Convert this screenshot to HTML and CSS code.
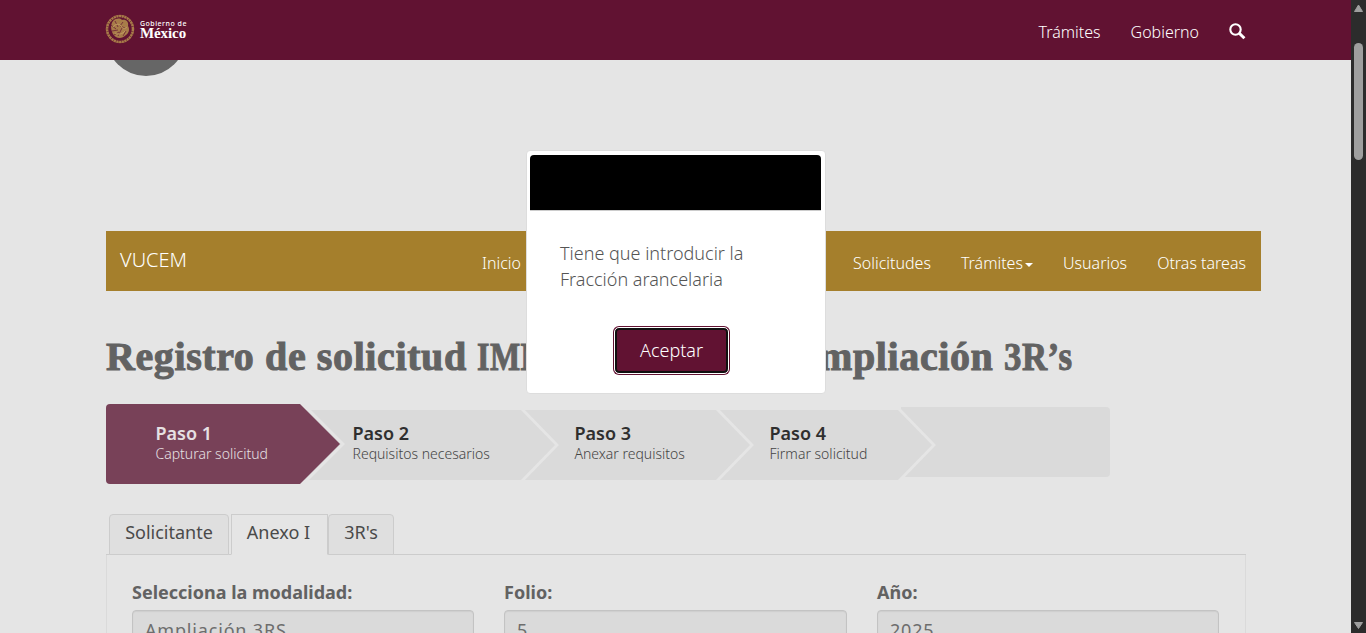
FILE: index.html
```html
<!DOCTYPE html>
<html lang="es">
<head>
<meta charset="utf-8">
<title>VUCEM</title>
<link rel="stylesheet" href="styles.css">
</head>
<body>
<div class="viewport">
  <div class="page">
    <header class="gob-bar">
      <div class="brand">
        <svg class="seal" viewBox="0 0 30 30" width="30" height="30" fill="none" stroke="#a87c49">
          <circle cx="15" cy="15" r="12.9" stroke-width="2.4" stroke-dasharray="2.2 .5"/>
          <circle cx="15" cy="15" r="13.9" stroke-width=".5"/>
          <path d="M8 7c3-3 7-3 9-1 4-1 7 2 6 6 2 3 1 7-2 9-4 4-10 4-13-1-2-4-3-9 0-13z" fill="#a87c49" stroke="none"/>
          <path d="M6 11l5 4M7 17l6-1M10 7l3 6M13 22l4-8M18 8l-3 4 5 2M9 21l5-3M18 22l3-5" stroke="#611232" stroke-width=".7"/>
          <path d="M8 13c2-3 6-4 8-1s4 3 6 1M10 19c3 2 8 1 10-2" stroke="#c09a60" stroke-width="1"/>
        </svg>
        <div class="wordmark"><span class="wm-top">Gobierno de</span><span class="wm-main">México</span></div>
      </div>
      <nav class="gob-nav">
        <a>Trámites</a><a>Gobierno</a>
        <svg class="search" viewBox="0 0 17 17" width="17" height="17" fill="none" stroke="#fff"><circle cx="6.5" cy="6.5" r="5.2" stroke-width="2.1"/><path d="M10.3 10.3L15.4 15.3" stroke-width="3"/></svg>
      </nav>
    </header>
    <div class="avatar-strip"><svg width="80" height="16" viewBox="0 0 80 16"><circle cx="40" cy="-24" r="40" fill="#666"/></svg></div>
    <nav class="vucem-bar">
      <span class="vucem-name">VUCEM</span>
      <a class="home">Inicio</a>
      <div class="vucem-links"><a>Solicitudes</a><a>Trámites<i class="caret"></i></a><a>Usuarios</a><a>Otras tareas</a></div>
    </nav>
    <h1 class="title"><span class="title-start">Registro de solicitud <span class="acronym">IMM</span></span><span class="title-end">mpliación <span class="suffix">3R’s</span></span></h1>
    <div class="steps">
      <svg class="steps-shape" width="1004" height="80" viewBox="0 0 1004 80">
        <path d="M196 6H795L830 41L795 76H196z" fill="#dadada"/>
        <path d="M795 3H1000a4 4 0 0 1 4 4V69a4 4 0 0 1-4 4H795z" fill="#dadada"/>
        <path d="M416 5L451 41L416 77M611 5L646 41L611 77M793 5L828 41L793 77M195 -2L237 40L195 82" fill="none" stroke="#e5e5e5" stroke-width="2.8"/>
        <path d="M4 0H194L234 40L194 80H4a4 4 0 0 1-4-4V4a4 4 0 0 1 4-4z" fill="#784158"/>
      </svg>
      <div class="step current"><b>Paso 1</b><span>Capturar solicitud</span></div>
      <div class="step"><b>Paso 2</b><span>Requisitos necesarios</span></div>
      <div class="step"><b>Paso 3</b><span>Anexar requisitos</span></div>
      <div class="step"><b>Paso 4</b><span>Firmar solicitud</span></div>
    </div>
    <div class="tabs"><a class="tab first">Solicitante</a><a class="tab active">Anexo I</a><a class="tab last">3R's</a></div>
    <section class="panel">
      <div class="field"><label>Selecciona la modalidad:</label><div class="input">Ampliación 3RS</div></div>
      <div class="field"><label>Folio:</label><div class="input">5</div></div>
      <div class="field"><label>Año:</label><div class="input">2025</div></div>
    </section>
  </div>
  <aside class="scrollbar">
    <svg width="15" height="633" viewBox="0 0 15 633" fill="#9f9f9f"><path d="M7.5 5L11.5 11.5H3.5z" stroke="#9f9f9f" stroke-linejoin="round"/><rect x="3" y="43" width="9" height="117" rx="4.5"/><path d="M3.5 622.5H11.5L7.5 628.5z" stroke="#9f9f9f" stroke-linejoin="round"/></svg>
  </aside>
  <div class="modal">
    <div class="modal-head"></div>
    <p class="modal-text">Tiene que introducir la<br>Fracción arancelaria</p>
    <button class="accept">Aceptar</button>
  </div>
</div>
</body>
</html>
```

FILE: styles.css
```css
* { box-sizing: border-box; }
body { margin: 0; overflow: hidden; font-family: "Noto Sans", "Open Sans", sans-serif; font-size: 16px; }
.viewport { position: relative; display: flex; width: 1366px; height: 633px; overflow: hidden; background: #e5e5e5; }
.page { width: 1351px; height: 633px; overflow: hidden; }
.scrollbar { width: 15px; background: #2c2c2c; }
.scrollbar svg { display: block; }

.gob-bar { display: flex; justify-content: space-between; height: 60px; padding: 0 105px 0 105px; background: #611232; color: #fff; }
.brand { display: flex; gap: 5px; padding-top: 14px; }
.wordmark { display: flex; flex-direction: column; padding-top: 5px; font-family: "Liberation Serif", serif; font-weight: 700; }
.wm-top { font: 500 7px/9px "Noto Sans", sans-serif; letter-spacing: .5px; white-space: nowrap; }
.wm-main { font-size: 15px; line-height: 10px; letter-spacing: -.1px; }
.gob-nav { display: flex; gap: 30px; padding-top: 21px; font-weight: 300; line-height: 22px; }
.search { margin-top: 2px; }

.avatar-strip { height: 171px; padding-left: 106px; }
.avatar-strip svg { display: block; }

.vucem-bar { display: flex; width: 1155px; height: 60px; margin-left: 106px; padding: 0 15px 0 14px; background: #a57f2c; color: #fff; font-weight: 300; line-height: 22px; }
.vucem-name { width: 362px; padding-top: 18px; font-size: 20px; }
.home { padding-top: 21px; }
.vucem-links { display: flex; gap: 30px; margin-left: auto; padding-top: 21px; }
.caret { display: inline-block; margin-left: 2px; vertical-align: middle; border: 4px solid transparent; border-top-color: #fff; border-bottom: 0; }

.title { display: flex; justify-content: space-between; width: 966px; height: 48px; margin: 42px 0 0 106px; color: #626262; font: 700 40px/48px "Liberation Serif", serif; white-space: nowrap; letter-spacing: .6px; -webkit-text-stroke: 1px #626262; }
.acronym { display: inline-block; transform: scaleX(.8); transform-origin: left; }
.suffix { display: inline-block; width: 68px; transform: scaleX(.87); transform-origin: left; }

.steps { position: relative; display: grid; grid-template-columns: 197px 222px 195px auto; width: 1004px; height: 80px; margin: 23px 0 0 106px; padding: 18px 0 0 49.5px; }
.steps-shape { position: absolute; left: 0; top: 0; }
.step { position: relative; color: #444; font-size: 14px; font-weight: 300; line-height: 17px; white-space: nowrap; }
.step b { display: block; color: #2f2f2f; font-size: 18px; font-weight: 600; line-height: 23px; }
.step.current, .step.current b { color: #e6e0e3; }

.tabs { display: flex; width: 1140px; height: 41px; margin: 30px 0 0 106px; padding-left: 3px; border-bottom: 1px solid #ccc; font-size: 18px; line-height: 35px; color: #4a4a4a; }
.tab { height: 41px; border: 1px solid #ccc; border-radius: 4px 4px 0 0; background: #dfdfdf; text-align: center; }
.first { width: 120px; margin-right: 2px; }
.active { width: 97px; padding-right: 2px; border-bottom-color: #e5e5e5; background: #e5e5e5; border-radius: 0; }
.last { width: 66px; }

.panel { display: grid; grid-template-columns: 342px 343px 342px; column-gap: 30px; width: 1140px; height: 100px; margin-left: 106px; padding: 25px 0 0 25px; border: solid #dadada; border-width: 0 1px; color: #626262; }
.field label { display: block; font-size: 18px; font-weight: 700; line-height: 25px; height: 30px; }
.input { height: 48px; padding: 6px 12px; border: 1px solid #c3c3c3; border-radius: 4px; background: #dadada; box-shadow: inset 0 1px 1px #cecece; color: #6d6d6d; font-size: 18px; line-height: 26px; letter-spacing: .82px; }

.modal { position: absolute; left: 526px; top: 150px; width: 300px; height: 244px; padding: 4px 4px 0 3px; border: 1px solid #ddd; border-radius: 4px; background: #fff; }
.modal-head { height: 56px; border-radius: 4px 4px 0 0; border-bottom: 1px solid #ccc; background: #000; }
.modal-text { margin: 29px 0 0 30px; color: #555; font-size: 18px; font-weight: 300; line-height: 26px; }
.accept { display: block; width: 113px; height: 45px; margin: 36px 0 0 85px; padding: 0 0 2px; border: 2px solid #101010; border-radius: 4px; outline: 1px solid #fff; outline-offset: 0; box-shadow: 0 0 0 2px #611232; background: #611232; color: #fff; font: 300 18px "Noto Sans", sans-serif; }
```
